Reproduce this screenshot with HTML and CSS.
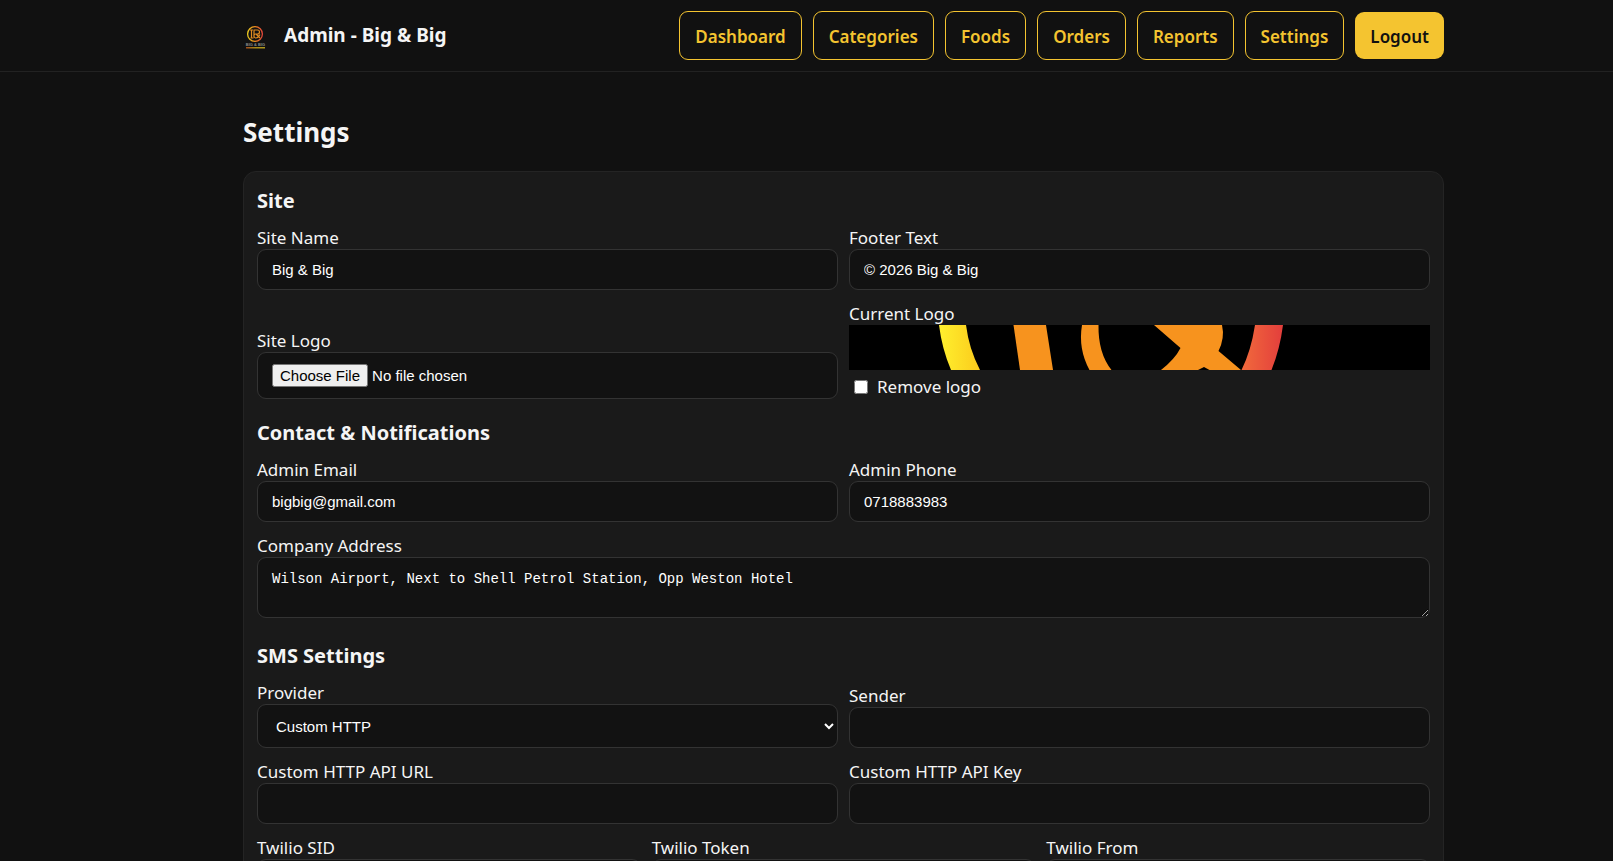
FILE: index.html
```html
<!DOCTYPE html>
<html lang="en-GB">
<head>
<meta charset="utf-8">
<title>Admin - Big &amp; Big</title>
<link rel="stylesheet" href="styles.css">
</head>
<body>
<header class="topbar">
  <div class="container topbar-inner">
    <div class="brand">
      <svg class="brand-logo" viewBox="0 0 26 26" aria-hidden="true">
        <defs>
          <linearGradient id="ring" x1="0" x2="1" y1="0" y2="0">
            <stop offset="0" stop-color="#e8c820"/><stop offset=".5" stop-color="#f08a1e"/><stop offset="1" stop-color="#e0453a"/>
          </linearGradient>
          <linearGradient id="bar" x1="0" x2="1" y1="0" y2="0">
            <stop offset="0" stop-color="#a04a1a"/><stop offset=".5" stop-color="#a88a18"/><stop offset="1" stop-color="#b09a1c"/>
          </linearGradient>
        </defs>
        <circle cx="12" cy="9" r="7.400" fill="none" stroke="url(#ring)" stroke-width="1.300"/>
        <path d="M7 5h3.500M8.500 5v8M7.500 13h3M11 5.500v7M11 5h3.500a2 2 0 0 1 0 4H12M12 9c-2 1-1 4 1 4s3-2 4-3.500M13 9l4 4" fill="none" stroke="#e08a20" stroke-width="1.200"/>
        <text x="12.500" y="21" text-anchor="middle" class="brand-logo-text">BIG &amp; BIG</text>
        <rect x="3" y="22" width="19" height="1.500" fill="url(#bar)"/>
      </svg>
      <strong class="brand-name">Admin - Big &amp; Big</strong>
    </div>
    <nav class="nav">
      <a class="btn" href="#">Dashboard</a>
      <a class="btn" href="#">Categories</a>
      <a class="btn" href="#">Foods</a>
      <a class="btn" href="#">Orders</a>
      <a class="btn" href="#">Reports</a>
      <a class="btn" href="#">Settings</a>
      <a class="btn btn-solid" href="#">Logout</a>
    </nav>
  </div>
</header>
<main class="page">
  <div class="container">
    <h1 class="page-title">Settings</h1>
    <form class="card">
      <h2 class="section-title">Site</h2>
      <div class="row">
        <div class="field"><label class="label" for="site-name">Site Name</label><input class="control" id="site-name" type="text" value="Big &amp; Big"></div>
        <div class="field"><label class="label" for="footer-text">Footer Text</label><input class="control" id="footer-text" type="text" value="© 2026 Big &amp; Big"></div>
      </div>
      <div class="row">
        <div class="field"><label class="label" for="site-logo">Site Logo</label><input class="control control-file" id="site-logo" type="file"></div>
        <div class="field">
          <span class="label">Current Logo</span>
          <svg class="logo-preview" viewBox="0 0 581 45" preserveAspectRatio="xMidYMid slice" role="img" aria-label="Current logo">
            <defs>
              <linearGradient id="yellow" x1="0" x2="1" y1="0" y2="0"><stop offset="0" stop-color="#fff02e"/><stop offset="1" stop-color="#fbcb1c"/></linearGradient>
              <linearGradient id="red" x1="0" x2="1" y1="0" y2="0"><stop offset="0" stop-color="#f16a3c"/><stop offset="1" stop-color="#e33e3c"/></linearGradient>
            </defs>
            <rect width="581" height="45" fill="#000"/>
            <path d="M90 0Q93 24 102 45H131Q120 24 117 0Z" fill="url(#yellow)"/>
            <path d="M164.500 0H197L204 45H171Z" fill="#f7931e"/>
            <path d="M233 0Q229 24 240.500 45H262.500Q249 28 249.500 0Z" fill="#f7931e"/>
            <path d="M305 0L331.500 23Q326 34 312 45H349L355 42L360.500 45H392L369.500 26Q376 13 373 0Z" fill="#f7931e"/>
            <path d="M406 0H434Q431 24 422.500 45H392.500Q402 26 406 0Z" fill="url(#red)"/>
          </svg>
          <label class="check"><input type="checkbox"> Remove logo</label>
        </div>
      </div>
      <h2 class="section-title">Contact &amp; Notifications</h2>
      <div class="row">
        <div class="field"><label class="label" for="email">Admin Email</label><input class="control" id="email" type="email" value="bigbig@gmail.com"></div>
        <div class="field"><label class="label" for="phone">Admin Phone</label><input class="control" id="phone" type="text" value="0718883983"></div>
      </div>
      <div class="field field-area"><label class="label" for="address">Company Address</label><textarea class="control control-area" id="address" rows="2" spellcheck="false">Wilson Airport, Next to Shell Petrol Station, Opp Weston Hotel</textarea></div>
      <h2 class="section-title">SMS Settings</h2>
      <div class="row">
        <div class="field"><label class="label" for="provider">Provider</label><select class="control control-select" id="provider"><option>Custom HTTP</option><option>Twilio</option></select></div>
        <div class="field"><label class="label" for="sender">Sender</label><input class="control" id="sender" type="text"></div>
      </div>
      <div class="row">
        <div class="field"><label class="label" for="api-url">Custom HTTP API URL</label><input class="control" id="api-url" type="text"></div>
        <div class="field"><label class="label" for="api-key">Custom HTTP API Key</label><input class="control" id="api-key" type="text"></div>
      </div>
      <div class="row row-three">
        <div class="field"><label class="label" for="sid">Twilio SID</label><input class="control" id="sid" type="text"></div>
        <div class="field"><label class="label" for="token">Twilio Token</label><input class="control" id="token" type="text"></div>
        <div class="field"><label class="label" for="from">Twilio From</label><input class="control" id="from" type="text"></div>
      </div>
    </form>
  </div>
</main>
</body>
</html>
```
FILE: styles.css
```css
* { box-sizing: border-box; }
html { scrollbar-width: none; }
body {
  margin: 0;
  background: #111;
  color: #f5f5f5;
  font-family: "Segoe UI", "Noto Sans", "Open Sans", sans-serif;
  font-size: 17px;
  line-height: 24px;
}
.container { max-width: 1201px; margin: 0 auto; }
.topbar {
  padding: 11px 0 11px 74px;
  border-bottom: 1px solid #222;
  background: #111;
}
.topbar-inner { display: flex; align-items: center; justify-content: space-between; }
.brand { display: flex; align-items: center; gap: 15px; }
.brand-logo { width: 26px; height: 26px; margin-top: 4px; }
.brand-logo-text { font: 700 4px "Liberation Sans", sans-serif; fill: #8a8a8a; }
.brand-name { padding-bottom: 2px; font-size: 19px; font-weight: 700; }
.nav { display: flex; align-items: center; gap: 11px; }
.btn {
  padding: 12px 15px 10px;
  border: 1px solid #f4c430;
  border-radius: 9px;
  color: #f4c430;
  font-size: 17px;
  font-weight: 600;
  line-height: 25px;
  text-decoration: none;
}
.btn-solid { border: 0; background: #f4c430; color: #111; }
.page { padding: 42px 0 24px 74px; }
.page-title { margin: 0 0 21px; font-size: 26px; line-height: 36px; }
.card {
  display: flex;
  flex-direction: column;
  gap: 11px;
  padding: 14px 13px;
  border: 1px solid #242424;
  border-radius: 13px;
  background: #1a1a1a;
}
.section-title { margin: 8px 0 0; padding-top: 2px; font-size: 20px; line-height: 26px; }
.section-title:first-child { margin-top: 0; }
.row { display: grid; grid-template-columns: 1fr 1fr; gap: 11px; align-items: end; }
.row-three { grid-template-columns: 1fr 1fr 1fr; }
.field { display: flex; flex-direction: column; min-width: 0; }
.field-area { padding-bottom: 4px; }
.label { padding-top: 2px; line-height: 22px; }
.control {
  width: 100%;
  height: 41px;
  margin: 0;
  padding: 11px 14px;
  border: 1px solid #333;
  border-radius: 9px;
  background: #121212;
  color: #fff;
  font-family: Arial, "Liberation Sans", sans-serif;
  font-size: 15px;
}
.control-file { height: 47px; }
.control-select { height: 44px; }
.control-area {
  height: 61px;
  font-family: "Liberation Mono", monospace;
  font-size: 14px;
  line-height: 20px;
  resize: vertical;
}
.logo-preview { display: block; width: 100%; height: 45px; }
.check { display: flex; align-items: center; gap: 9px; padding: 5px 0 0 5px; }
.check input { width: 14px; height: 14px; margin: 0; }
```
